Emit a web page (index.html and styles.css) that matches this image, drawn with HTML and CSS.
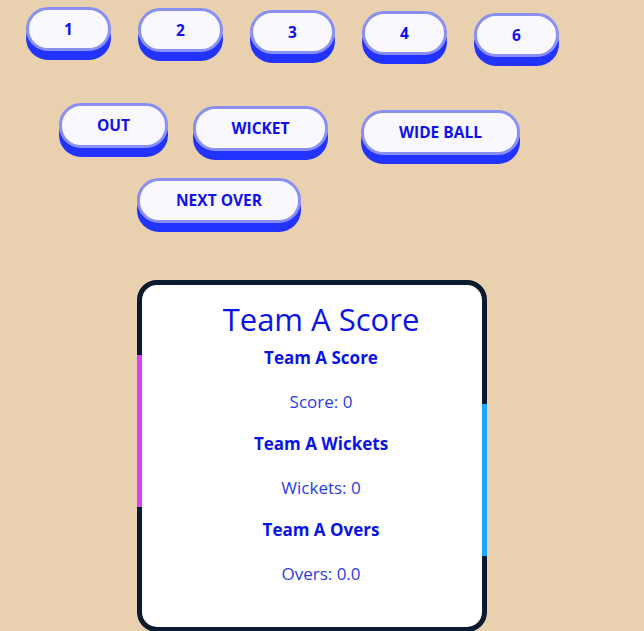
FILE: index.html
```html
<!DOCTYPE html>
<html lang="en">
<head>
<meta charset="utf-8">
<title>Cricket Scoreboard</title>
<link rel="stylesheet" href="styles.css">
</head>
<body>
<div class="controls">
  <div class="row row-runs">
    <button class="btn">1</button>
    <button class="btn">2</button>
    <button class="btn">3</button>
    <button class="btn">4</button>
    <button class="btn">6</button>
  </div>
  <div class="row row-events">
    <button class="btn">OUT</button>
    <button class="btn">WICKET</button>
    <button class="btn">WIDE BALL</button>
  </div>
  <div class="row row-next">
    <button class="btn">NEXT OVER</button>
  </div>
</div>
<div class="card">
  <h1 class="card-title">Team A Score</h1>
  <h3 class="stat-label">Team A Score</h3>
  <p class="stat-value">Score: 0</p>
  <h3 class="stat-label">Team A Wickets</h3>
  <p class="stat-value">Wickets: 0</p>
  <h3 class="stat-label">Team A Overs</h3>
  <p class="stat-value">Overs: 0.0</p>
</div>
</body>
</html>
```
FILE: styles.css
```css
* { box-sizing: border-box; }
html, body { margin: 0; padding: 0; }
body {
  background: #e9d0ae;
  font-family: "Open Sans", "Noto Sans", sans-serif;
  width: 644px;
  height: 631px;
  overflow: hidden;
}
.controls { padding-top: 7px; }
.row { display: flex; align-items: flex-start; }
.btn {
  font-family: "Open Sans", sans-serif;
  font-weight: 700;
  font-size: 15.5px;
  line-height: 19px;
  color: #1010ee;
  background: #f8f8fe;
  border: 3px solid #8a90f2;
  border-radius: 22px;
  padding: 10px 0;
  height: 45px;
  box-shadow: 0 9px 0 #2233ff;
  cursor: pointer;
  margin: 0;
}
.row-runs { margin-left: 26px; gap: 27px; }
.row-runs .btn { width: 85px; height: 44px; }
.row-runs .btn:nth-child(2) { margin-top: 1px; }
.row-runs .btn:nth-child(3) { margin-top: 3px; }
.row-runs .btn:nth-child(4) { margin-top: 4px; }
.row-runs .btn:nth-child(5) { margin-top: 6px; }
.row-events { margin-left: 59px; margin-top: 46px; }
.row-events .btn:nth-child(1) { width: 109px; }
.row-events .btn:nth-child(2) { width: 135px; margin-left: 25px; margin-top: 3px; }
.row-events .btn:nth-child(3) { width: 159px; margin-left: 33px; margin-top: 7px; }
.row-next { margin-left: 137px; margin-top: 23px; }
.row-next .btn { width: 164px; }
.card {
  position: relative;
  width: 350px;
  height: 352px;
  margin: 57px 0 0 137px;
  background: #ffffff;
  border: 5px solid #0b1a2e;
  border-radius: 20px;
  padding: 14px 0 0 18px;
  text-align: center;
}
.card::before,
.card::after {
  content: "";
  position: absolute;
  width: 5px;
  height: 152px;
}
.card::before { left: -5px; top: 70px; background: #e040fb; }
.card::after { right: -5px; top: 119px; background: #1ea7ff; }
.card-title {
  margin: 0 0 8px;
  font-size: 31px;
  line-height: 40px;
  font-weight: 400;
  color: #0a14e8;
}
.stat-label {
  margin: 0 0 22px;
  font-size: 17px;
  line-height: 22px;
  font-weight: 700;
  color: #0a14e8;
}
.stat-value {
  margin: 0 0 20px;
  font-size: 17px;
  line-height: 22px;
  color: #2a3ce8;
}
```
